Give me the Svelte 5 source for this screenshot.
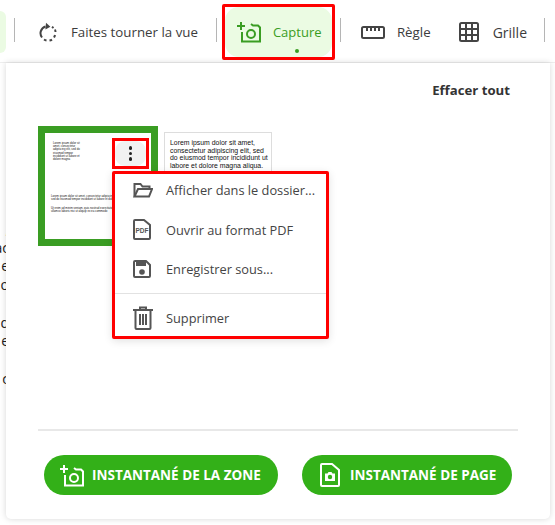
<script>
  const menuItems = [
    { id: "folder", label: "Afficher dans le dossier..." },
    { id: "pdf", label: "Ouvrir au format PDF" },
    { id: "save", label: "Enregistrer sous..." }
  ];
  const behindLetters = [",", "ac", "e", "o", "", "d", "e", "i", "c"];
</script>

<div class="page">
  <header class="toolbar">
    <div class="prev-tab"></div>
    <span class="sep first"></span>
    <button class="tool rotate">
      <svg width="18" height="20" viewBox="0 0 18 20" fill="none" stroke="#444" stroke-width="2">
        <path d="M6.500 4.500A7 7 0 0 0 3 15.500" />
        <path d="M5 17.500a7 7 0 0 0 2.500 1" />
        <path d="M10.500 18.600a7 7 0 0 0 2.500-1M15 15.500a7 7 0 0 0 1-2.500M16.500 10a7 7 0 0 0-.5-2.500M14.500 6l-1.500-1.200" />
        <path d="M7 .8l4.400 4-5 2.600z" fill="#444" stroke="none" />
      </svg>
      <span>Faites tourner la vue</span>
    </button>
    <span class="sep"></span>
    <div class="capture-mark">
      <button class="tool capture">
        <svg width="25" height="22" viewBox="0 0 25 22" fill="none" stroke="#3a9d23" stroke-width="2">
          <path d="M0 5h8M4 1v8" />
          <path d="M5 11v9.500h18V6.500l-2-2h-5l-2-1.500" />
          <circle cx="14" cy="13" r="4" />
        </svg>
        <span>Capture</span>
        <i class="dot"></i>
      </button>
    </div>
    <span class="sep"></span>
    <button class="tool ruler">
      <svg width="24" height="13" viewBox="0 0 24 13" fill="none" stroke="#444" stroke-width="2">
        <rect x="1" y="1" width="22" height="11" rx="1.500" />
        <path d="M6 1v4M10 1v4M14 1v4M18 1v4" />
      </svg>
      <span>Règle</span>
    </button>
    <button class="tool grid">
      <svg width="20" height="20" viewBox="0 0 20 20" fill="none" stroke="#444" stroke-width="2">
        <rect x="1" y="1" width="18" height="18" rx="1.500" />
        <path d="M7 1v18M13 1v18M1 7h18M1 13h18" />
      </svg>
      <span class="grid-label">Grille</span>
    </button>
    <span class="sep last"></span>
  </header>

  <div class="behind">
    {#each behindLetters as letter}
      <span>{letter || "\u00a0"}</span>
    {/each}
  </div>

  <section class="panel">
    <div class="panel-head">
      <button class="clear">Effacer tout</button>
    </div>

    <div class="shots">
      <div class="shot selected">
        <div class="mini mini-top">Lorem ipsum dolor sit amet, consectetur adipiscing elit, sed do eiusmod tempor incididunt ut labore et dolore magna</div>
        <div class="mini mini-mid">Lorem ipsum dolor sit amet, consectetur adipiscing elit, sed do eiusmod tempor incididunt ut labore et dolore</div>
        <div class="mini mini-low">Ut enim ad minim veniam, quis nostrud exercitation ullamco laboris nisi ut aliquip ex ea commodo</div>
      </div>
      <div class="shot plain">
        Lorem ipsum dolor sit amet, consectetur adipiscing elit, sed do eiusmod tempor incididunt ut labore et dolore magna aliqua.
      </div>
      <button class="more" aria-label="Plus">
        <span class="more-fill"><i></i><i></i><i></i></span>
      </button>

      <div class="menu">
        <div class="menu-rows">
          {#each menuItems as item}
            <div class="menu-item">
              {#if item.id === "folder"}
                <svg width="20" height="16" viewBox="0 0 20 16" fill="none" stroke="#555" stroke-width="2">
                  <path d="M1.500 14.500V2h6l2 2.500h7v2.500" />
                  <path d="M1.500 14.500L5 7h14l-3 7.500z" />
                </svg>
              {:else if item.id === "pdf"}
                <svg width="18" height="21" viewBox="0 0 18 21" fill="none" stroke="#555" stroke-width="2">
                  <path d="M1 2a1 1 0 0 1 1-1h9l6 5v13a1 1 0 0 1-1 1H2a1 1 0 0 1-1-1z" />
                  <text x="9" y="14" text-anchor="middle" class="pdf-tag">PDF</text>
                </svg>
              {:else}
                <svg width="18" height="18" viewBox="0 0 18 18" fill="none" stroke="#555" stroke-width="2">
                  <path d="M1 2a1 1 0 0 1 1-1h11l4 4v11a1 1 0 0 1-1 1H2a1 1 0 0 1-1-1z" />
                  <path d="M4 2v3h8V2" fill="#555" />
                  <circle cx="9" cy="12" r="2.800" fill="#555" stroke="none" />
                </svg>
              {/if}
              <span>{item.label}</span>
            </div>
          {/each}
          <hr />
          <div class="menu-item last">
            <svg width="20" height="24" viewBox="0 0 20 24" fill="none" stroke="#555" stroke-width="2">
              <path d="M0 4h20M7 4V1.500h6V4" />
              <path d="M2.500 4v18a1 1 0 0 0 1 1h13a1 1 0 0 0 1-1V4" />
              <path d="M7 8v11M10 8v11M13 8v11" />
            </svg>
            <span>Supprimer</span>
          </div>
        </div>
      </div>
    </div>

    <div class="actions">
      <button class="snap zone">
        <svg width="25" height="23" viewBox="0 0 25 23" fill="none" stroke="#fff" stroke-width="2">
          <path d="M0 5h8M4 1v8" />
          <path d="M5 11v10.500h18V7.500l-2-2h-5l-2-1.500" />
          <circle cx="14" cy="14" r="4" />
        </svg>
        <span>INSTANTANÉ DE LA ZONE</span>
      </button>
      <button class="snap whole">
        <svg width="20" height="24" viewBox="0 0 20 24" fill="none" stroke="#fff" stroke-width="2">
          <path d="M1 2a1 1 0 0 1 1-1h10l7 6v15a1 1 0 0 1-1 1H2a1 1 0 0 1-1-1z" />
          <path d="M5 10.500h2.500l1-1.500h3l1 1.500H15V18H5z" fill="#fff" stroke="none" />
          <circle cx="10" cy="14" r="2.200" fill="#33b018" stroke="none" />
        </svg>
        <span>INSTANTANÉ DE PAGE</span>
      </button>
    </div>
  </section>
</div>

<style>
  :global(body) {
    margin: 0;
    background: #fff;
  }

  .page {
    position: relative;
    width: 555px;
    height: 525px;
    overflow: hidden;
    font-family: "Open Sans", "Noto Sans", sans-serif;
    color: #3c3c3c;
  }

  button {
    border: 0;
    background: none;
    padding: 0;
    font: inherit;
    color: inherit;
  }

  .toolbar {
    display: flex;
    align-items: center;
    height: 60px;
    padding-bottom: 2px;
    border-bottom: 1px solid #eee;
  }

  .prev-tab {
    width: 6px;
    height: 42px;
    margin-top: 4px;
    background: #ebfbe3;
    border-radius: 0 14px 14px 0;
  }

  .sep {
    width: 1px;
    height: 24px;
    background: #b5b5b5;
    flex: none;
  }

  .sep.first {
    margin-left: 8px;
  }

  .sep.last {
    margin-left: 17px;
  }

  .tool {
    display: flex;
    align-items: center;
    font-size: 13.300px;
    margin-top: 4px;
  }

  .rotate {
    margin-left: 24px;
    margin-right: 18px;
    gap: 14px;
  }

  .capture-mark {
    margin-left: 5px;
    margin-right: 5px;
    width: 113px;
    height: 56px;
    margin-top: 3px;
    box-sizing: border-box;
    border: 3px solid #f00;
    border-radius: 2px;
    flex: none;
  }

  .capture {
    position: relative;
    width: 107px;
    height: 50px;
    margin: 0;
    padding-left: 12px;
    gap: 11px;
    background: #ebfbe3;
    border-radius: 14px;
    color: #3a9d23;
    box-sizing: border-box;
    font-size: 13px;
  }

  .dot {
    position: absolute;
    left: 70px;
    bottom: 4px;
    width: 4px;
    height: 4px;
    border-radius: 50%;
    background: #3a9d23;
  }

  .ruler {
    margin-left: 20px;
    gap: 12px;
  }

  .grid {
    margin-left: 28px;
    gap: 14px;
  }

  .grid-label {
    font-size: 14px;
  }

  .behind {
    position: absolute;
    left: -5px;
    top: 220px;
    display: flex;
    flex-direction: column;
    align-items: flex-end;
    width: 14px;
    font-size: 14px;
    line-height: 18.700px;
    color: #222;
  }

  .panel {
    position: absolute;
    left: 6px;
    top: 63px;
    width: 544px;
    height: 456px;
    box-sizing: border-box;
    padding: 0 32px;
    background: #fff;
    border-radius: 0 0 5px 5px;
    box-shadow: 0 0 6px rgba(0, 0, 0, 0.16);
    display: flex;
    flex-direction: column;
  }

  .panel-head {
    display: flex;
    justify-content: flex-end;
    padding: 18px 8px 0 0;
  }

  .clear {
    font-size: 13.200px;
    font-weight: 700;
    color: #333;
  }

  .shots {
    position: relative;
    flex: 1;
    display: flex;
    align-items: flex-start;
    gap: 6px;
    margin-top: 27px;
    width: 480px;
    border-bottom: 2px solid #e8e8e8;
  }

  .shot {
    box-sizing: border-box;
    background: #fff;
    flex: none;
  }

  .selected {
    position: relative;
    width: 120px;
    height: 120px;
    border: 7px solid #3a9d23;
  }

  .mini {
    position: absolute;
    font-family: "Liberation Sans", sans-serif;
    font-size: 2.800px;
    line-height: 3.200px;
    color: #111;
  }

  .mini-top {
    left: 8px;
    top: 9px;
    width: 31px;
  }

  .mini-mid {
    left: 6px;
    top: 62px;
    width: 72px;
  }

  .mini-low {
    left: 6px;
    top: 74px;
    width: 66px;
  }

  .plain {
    width: 108px;
    height: 60px;
    margin-top: 6px;
    padding: 6px 2px 0 5px;
    border: 1px solid #ddd;
    border-bottom: 0;
    font-family: "Liberation Sans", sans-serif;
    font-size: 6.900px;
    line-height: 7.500px;
    color: #111;
    overflow: hidden;
  }

  .more {
    position: absolute;
    left: 74px;
    top: 12px;
    width: 37px;
    height: 31px;
    box-sizing: border-box;
    border: 3px solid #f00;
    background: #fff;
  }

  .more-fill {
    display: flex;
    flex-direction: column;
    align-items: center;
    justify-content: center;
    gap: 2px;
    height: 100%;
    background: #f1f1f1;
    border-radius: 10px;
  }

  .more i {
    width: 3.500px;
    height: 3.500px;
    border-radius: 50%;
    background: #222;
  }

  .menu {
    position: absolute;
    left: 74px;
    top: 45px;
    width: 217px;
    height: 168px;
    box-sizing: border-box;
    border: 3px solid #f00;
    border-radius: 2px;
    background: #fff;
    box-shadow: 0 2px 8px rgba(0, 0, 0, 0.12);
  }

  .menu-rows {
    margin-top: -3.500px;
  }

  .menu-item {
    position: relative;
    display: flex;
    align-items: center;
    height: 39.500px;
    font-size: 12.800px;
    color: #444;
  }

  .menu-item.last {
    height: 48px;
  }

  .menu-item svg {
    margin-left: 18px;
    flex: none;
  }

  .menu-item span {
    position: absolute;
    left: 51px;
  }

  .menu hr {
    margin: 4px 0 0;
    border: 0;
    border-top: 1px solid #e2e2e2;
  }

  .pdf-tag {
    font-family: "Liberation Sans", sans-serif;
    font-size: 6.500px;
    font-weight: 700;
    fill: #555;
    stroke: none;
  }

  .actions {
    display: flex;
    gap: 24px;
    padding: 24px 0 24px 6px;
  }

  .snap {
    display: flex;
    align-items: center;
    height: 40px;
    border-radius: 20px;
    background: #33b018;
    color: #fff;
    font-size: 13.500px;
    font-weight: 700;
    box-sizing: border-box;
  }

  .zone {
    width: 234px;
    padding-left: 16px;
    gap: 7px;
  }

  .whole {
    width: 210px;
    padding-left: 18px;
    gap: 10px;
  }
</style>
